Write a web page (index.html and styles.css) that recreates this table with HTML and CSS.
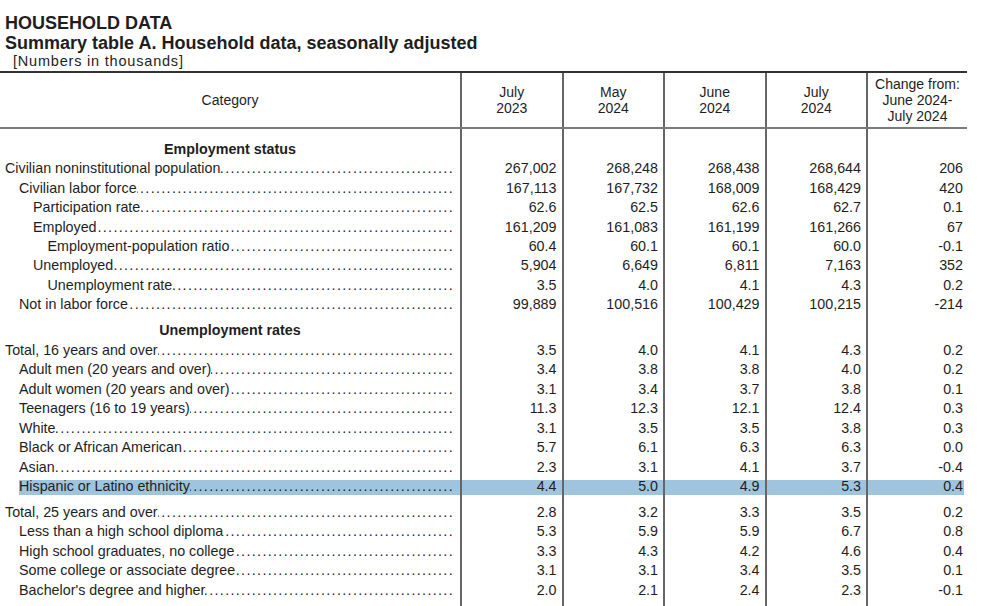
FILE: index.html
```html
<!DOCTYPE html>
<html lang="en">
<head>
    <meta charset="UTF-8">
    <meta name="viewport" content="width=device-width, initial-scale=1.0">
    <title>Household Data - Summary table A</title>
    <link rel="stylesheet" href="styles.css">
</head>
<body>
    <div class="page">
        <h1 class="title">HOUSEHOLD DATA</h1>
        <h2 class="title">Summary table A. Household data, seasonally adjusted</h2>
        <div class="note">[Numbers in thousands]</div>

        <div class="tbl">
            <!-- column headings -->
            <div class="row head">
                <div>Category</div>
                <div>July<br>2023</div>
                <div>May<br>2024</div>
                <div>June<br>2024</div>
                <div>July<br>2024</div>
                <div>Change from:<br>June 2024-<br>July 2024</div>
            </div>

            <!-- Employment status -->
            <div class="row sec first">
                <div class="hd">Employment status</div><div></div><div></div><div></div><div></div><div></div>
            </div>
            <div class="row">
                <div class="cat l0">Civilian noninstitutional population</div>
                <div>267,002</div><div>268,248</div><div>268,438</div><div>268,644</div><div>206</div>
            </div>
            <div class="row">
                <div class="cat l1">Civilian labor force</div>
                <div>167,113</div><div>167,732</div><div>168,009</div><div>168,429</div><div>420</div>
            </div>
            <div class="row">
                <div class="cat l2">Participation rate</div>
                <div>62.6</div><div>62.5</div><div>62.6</div><div>62.7</div><div>0.1</div>
            </div>
            <div class="row">
                <div class="cat l2">Employed</div>
                <div>161,209</div><div>161,083</div><div>161,199</div><div>161,266</div><div>67</div>
            </div>
            <div class="row">
                <div class="cat l3">Employment-population ratio</div>
                <div>60.4</div><div>60.1</div><div>60.1</div><div>60.0</div><div>-0.1</div>
            </div>
            <div class="row">
                <div class="cat l2">Unemployed</div>
                <div>5,904</div><div>6,649</div><div>6,811</div><div>7,163</div><div>352</div>
            </div>
            <div class="row">
                <div class="cat l3">Unemployment rate</div>
                <div>3.5</div><div>4.0</div><div>4.1</div><div>4.3</div><div>0.2</div>
            </div>
            <div class="row">
                <div class="cat l1">Not in labor force</div>
                <div>99,889</div><div>100,516</div><div>100,429</div><div>100,215</div><div>-214</div>
            </div>

            <!-- Unemployment rates -->
            <div class="row sec">
                <div class="hd">Unemployment rates</div><div></div><div></div><div></div><div></div><div></div>
            </div>
            <div class="row">
                <div class="cat l0">Total, 16 years and over</div>
                <div>3.5</div><div>4.0</div><div>4.1</div><div>4.3</div><div>0.2</div>
            </div>
            <div class="row">
                <div class="cat l1">Adult men (20 years and over)</div>
                <div>3.4</div><div>3.8</div><div>3.8</div><div>4.0</div><div>0.2</div>
            </div>
            <div class="row">
                <div class="cat l1">Adult women (20 years and over)</div>
                <div>3.1</div><div>3.4</div><div>3.7</div><div>3.8</div><div>0.1</div>
            </div>
            <div class="row">
                <div class="cat l1">Teenagers (16 to 19 years)</div>
                <div>11.3</div><div>12.3</div><div>12.1</div><div>12.4</div><div>0.3</div>
            </div>
            <div class="row">
                <div class="cat l1">White</div>
                <div>3.1</div><div>3.5</div><div>3.5</div><div>3.8</div><div>0.3</div>
            </div>
            <div class="row">
                <div class="cat l1">Black or African American</div>
                <div>5.7</div><div>6.1</div><div>6.3</div><div>6.3</div><div>0.0</div>
            </div>
            <div class="row">
                <div class="cat l1">Asian</div>
                <div>2.3</div><div>3.1</div><div>4.1</div><div>3.7</div><div>-0.4</div>
            </div>
            <div class="row hl">
                <div class="cat l1">Hispanic or Latino ethnicity</div>
                <div>4.4</div><div>5.0</div><div>4.9</div><div>5.3</div><div>0.4</div>
            </div>

            <div class="row gap"><div></div><div></div><div></div><div></div><div></div><div></div></div>

            <div class="row">
                <div class="cat l0">Total, 25 years and over</div>
                <div>2.8</div><div>3.2</div><div>3.3</div><div>3.5</div><div>0.2</div>
            </div>
            <div class="row">
                <div class="cat l1">Less than a high school diploma</div>
                <div>5.3</div><div>5.9</div><div>5.9</div><div>6.7</div><div>0.8</div>
            </div>
            <div class="row">
                <div class="cat l1">High school graduates, no college</div>
                <div>3.3</div><div>4.3</div><div>4.2</div><div>4.6</div><div>0.4</div>
            </div>
            <div class="row">
                <div class="cat l1">Some college or associate degree</div>
                <div>3.1</div><div>3.1</div><div>3.4</div><div>3.5</div><div>0.1</div>
            </div>
            <div class="row">
                <div class="cat l1">Bachelor's degree and higher</div>
                <div>2.0</div><div>2.1</div><div>2.4</div><div>2.3</div><div>-0.1</div>
            </div>

            <div class="row gap end"><div></div><div></div><div></div><div></div><div></div><div></div></div>
        </div>
    </div>
</body>
</html>
```

FILE: styles.css
```css
* {
    box-sizing: border-box;
}
body {
    margin: 0;
    font-family: "Liberation Sans", Arial, Helvetica, sans-serif;
    color: #1e1e1e;
    background: #fff;
    overflow: hidden;
}
.page {
    padding-top: 13px;
}
.title {
    font-size: 18px;
    font-weight: bold;
    line-height: 20px;
    margin: 0 0 0 5px;
}
.note {
    font-size: 14.5px;
    letter-spacing: 0.8px;
    line-height: 16px;
    margin: 0 0 2px 13px;
}
.tbl {
    width: 967px;
    border-top: 2px solid #333;
    font-size: 14.3px;
}
.row {
    display: grid;
    grid-template-columns: 462px 101.5px 101.5px 101.5px 101.5px 99px;
    line-height: 19.45px;
}
.row > div {
    border-right: 2px solid #666;
    padding-right: 5px;
    text-align: right;
    white-space: nowrap;
}
.row > div:last-child {
    border-right: 0;
    padding-right: 4px;
}

/* header */
.head {
    height: 56px;
    line-height: 16px;
    font-size: 14px;
    border-bottom: 2px solid #7a7a7a;
}
.head > div {
    display: flex;
    align-items: center;
    justify-content: center;
    text-align: center;
    padding-right: 0;
}
.head > div:last-child {
    padding-right: 0;
}

/* section headings */
.sec > div {
    padding-top: 6.5px;
}
.sec.first > div {
    padding-top: 10.75px;
}
.row > .hd {
    text-align: center;
    font-weight: bold;
    padding-right: 0;
}

/* category labels with dot leaders */
.row > .cat {
    display: flex;
    text-align: left;
    padding-right: 6px;
}
.cat::after {
    content: "........................................................................................................................";
    flex: 1;
    min-width: 0;
    overflow: hidden;
    direction: rtl;
    letter-spacing: 1.35px;
}
.l0 { padding-left: 5px; }
.l1 { padding-left: 19px; }
.l2 { padding-left: 33px; }
.l3 { padding-left: 47.5px; }

.gap {
    height: 6.5px;
}
.end {
    height: 24px;
}
.hl {
    background: linear-gradient(#9ec4de, #9ec4de) no-repeat;
    background-position: 19px 3px;
    background-size: calc(100% - 22px) 15px;
}
```
